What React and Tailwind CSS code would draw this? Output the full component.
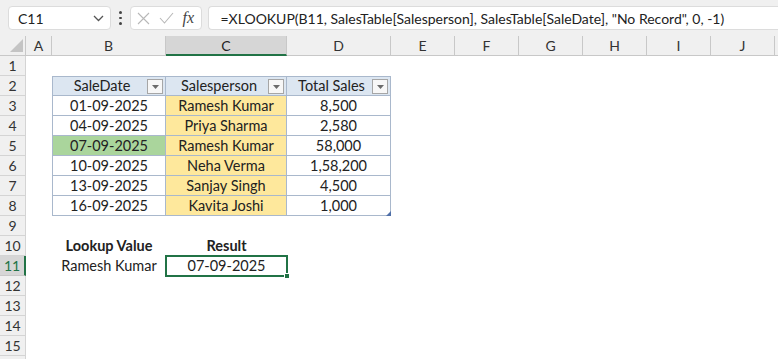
import React from "react";

const COLS = [
  { key: "A", w: "w-[26px]" },
  { key: "B", w: "w-[114px]" },
  { key: "C", w: "w-[121px]" },
  { key: "D", w: "w-[104px]" },
  { key: "E", w: "w-[64px]" },
  { key: "F", w: "w-[64px]" },
  { key: "G", w: "w-[64px]" },
  { key: "H", w: "w-[64px]" },
  { key: "I", w: "w-[64px]" },
  { key: "J", w: "w-[64px]" },
  { key: "", w: "w-[64px]" },
];

const sales = [
  ["01-09-2025", "Ramesh Kumar", "8,500"],
  ["04-09-2025", "Priya Sharma", "2,580"],
  ["07-09-2025", "Ramesh Kumar", "58,000"],
  ["10-09-2025", "Neha Verma", "1,58,200"],
  ["13-09-2025", "Sanjay Singh", "4,500"],
  ["16-09-2025", "Kavita Joshi", "1,000"],
];

const FilterButton = () => (
  <span className="absolute right-[2px] top-[2px] flex h-[15px] w-[16px] items-center justify-center border border-[#a6a6a6] bg-[#f7f7f7]">
    <svg width="7" height="4" viewBox="0 0 7 4">
      <path d="M0 0h7L3.5 4z" fill="#6b6b6b" />
    </svg>
  </span>
);

const RowHeader = ({ n, active }) => (
  <div
    className={
      "flex h-[20px] w-[26px] shrink-0 items-center justify-center border-b border-r text-[14px] " +
      (active
        ? "border-b-[#c8c8c8] border-r-2 border-r-[#217346] bg-[#d6d6d6] text-[#217346]"
        : "border-[#d4d4d4] bg-[#f0f0f0] text-[#333]")
    }
  >
    {n}
  </div>
);

const NameBox = () => (
  <div className="flex h-[24px] w-[103px] items-center justify-between rounded-[4px] border border-[#dcdcdc] bg-white pl-[9px] pr-[6px] text-[14px] text-[#222]">
    <span>C11</span>
    <svg width="11" height="7" viewBox="0 0 11 7">
      <path d="M1 1l4.5 4.5L10 1" fill="none" stroke="#555" strokeWidth="1.3" />
    </svg>
  </div>
);

const FormulaBar = () => (
  <div className="flex h-[36px] items-center bg-[#f0f0f0] pl-[8px]">
    <NameBox />
    <div className="mx-[8px] flex flex-col gap-[3px]">
      <span className="h-[2.5px] w-[2.5px] rounded-full bg-[#444]" />
      <span className="h-[2.5px] w-[2.5px] rounded-full bg-[#444]" />
      <span className="h-[2.5px] w-[2.5px] rounded-full bg-[#444]" />
    </div>
    <div className="flex h-[24px] w-[72px] items-center gap-[9px] rounded-[4px] border border-[#dcdcdc] bg-white pl-[6px]">
      <svg width="13" height="13" viewBox="0 0 13 13">
        <path d="M1 1l11 11M12 1L1 12" stroke="#b8b8b8" strokeWidth="1.1" />
      </svg>
      <svg width="15" height="12" viewBox="0 0 15 12">
        <path d="M1 6l4.5 5L14 1" fill="none" stroke="#b8b8b8" strokeWidth="1.1" />
      </svg>
      <span className="font-['Liberation_Serif',serif] text-[16px] italic text-[#444]">fx</span>
    </div>
    <div className="ml-[6px] flex h-[24px] flex-1 items-center rounded-l-[4px] border border-r-0 border-[#dcdcdc] bg-white pl-[12px] text-[14px] text-[#222]">
      =XLOOKUP(B11, SalesTable[Salesperson], SalesTable[SaleDate], "No Record", 0, -1)
    </div>
  </div>
);

const ColumnHeaders = () => (
  <div className="flex h-[20px]">
    <div className="relative h-[20px] w-[26px] shrink-0 border-b border-r border-[#c8c8c8] bg-[#f0f0f0]">
      <svg className="absolute left-[10px] top-[3px]" width="13" height="13" viewBox="0 0 13 13">
        <path d="M13 0v13H0z" fill="#c4c4c4" />
      </svg>
    </div>
    {COLS.map((c, i) => (
      <div
        key={i}
        className={
          "flex h-[20px] shrink-0 items-center justify-center border-r text-[14px] " +
          c.w +
          (c.key === "C"
            ? " border-b-2 border-b-[#217346] border-r-[#c8c8c8] bg-[#d6d6d6] text-[#222]"
            : " border-b border-[#c8c8c8] bg-[#f0f0f0] text-[#333]")
        }
      >
        {c.key}
      </div>
    ))}
  </div>
);

const Blank = ({ w }) => <div className={"h-[20px] shrink-0 " + w} />;

const TableCell = ({ w, children, fill, first, header, filter }) => (
  <div
    className={
      "relative flex h-[20px] shrink-0 items-center justify-center border-b border-r border-[#a9b8cc] " +
      w +
      (first ? " border-l" : "") +
      (header ? " border-t pr-[14px]" : "") +
      " " +
      fill
    }
  >
    {children}
    {filter ? <FilterButton /> : null}
  </div>
);

const TableRowCells = ({ r, last }) => (
  <>
    <TableCell w="w-[114px]" first fill={r[0] === "07-09-2025" ? "bg-[#aad59c]" : "bg-white"}>
      {r[0]}
    </TableCell>
    <TableCell w="w-[121px]" fill="bg-[#fee89c]">
      {r[1]}
    </TableCell>
    <TableCell w="w-[104px]" fill="bg-white">
      {r[2]}
      {last ? (
        <svg className="absolute -bottom-[1px] -right-[1px]" width="5" height="5" viewBox="0 0 5 5">
          <path d="M5 0v5H0z" fill="#4f6fa8" />
        </svg>
      ) : null}
    </TableCell>
  </>
);

export default function App() {
  const rows = [];
  for (let n = 1; n <= 16; n++) {
    let content = null;
    if (n === 2) {
      content = (
        <>
          <TableCell w="w-[114px]" first header filter fill="bg-[#dce6f1]">
            SaleDate
          </TableCell>
          <TableCell w="w-[121px]" header filter fill="bg-[#dce6f1]">
            Salesperson
          </TableCell>
          <TableCell w="w-[104px]" header filter fill="bg-[#dce6f1]">
            Total Sales
          </TableCell>
        </>
      );
    } else if (n >= 3 && n <= 8) {
      content = <TableRowCells r={sales[n - 3]} last={n === 8} />;
    } else if (n === 10) {
      content = (
        <>
          <div className="flex h-[20px] w-[114px] shrink-0 items-center justify-center font-bold">Lookup Value</div>
          <div className="flex h-[20px] w-[121px] shrink-0 items-center justify-center font-bold">Result</div>
        </>
      );
    } else if (n === 11) {
      content = (
        <>
          <div className="flex h-[20px] w-[114px] shrink-0 items-center justify-center">Ramesh Kumar</div>
          <div className="relative -mx-px -my-px flex h-[22px] w-[123px] shrink-0 items-center justify-center border-2 border-[#217346]">
            07-09-2025
            <span className="absolute -bottom-[4px] -right-[4px] h-[6px] w-[6px] border border-white bg-[#217346]" />
          </div>
        </>
      );
    }
    rows.push(
      <div key={n} className="flex h-[20px]">
        <RowHeader n={n} active={n === 11} />
        <Blank w="w-[26px]" />
        {content}
      </div>
    );
  }

  return (
    <div className="h-[359px] w-[778px] overflow-hidden bg-white font-['Lato','Liberation_Sans',sans-serif] text-[14.5px] text-[#222]">
      <FormulaBar />
      <ColumnHeaders />
      <div className="flex flex-col">{rows}</div>
    </div>
  );
}
